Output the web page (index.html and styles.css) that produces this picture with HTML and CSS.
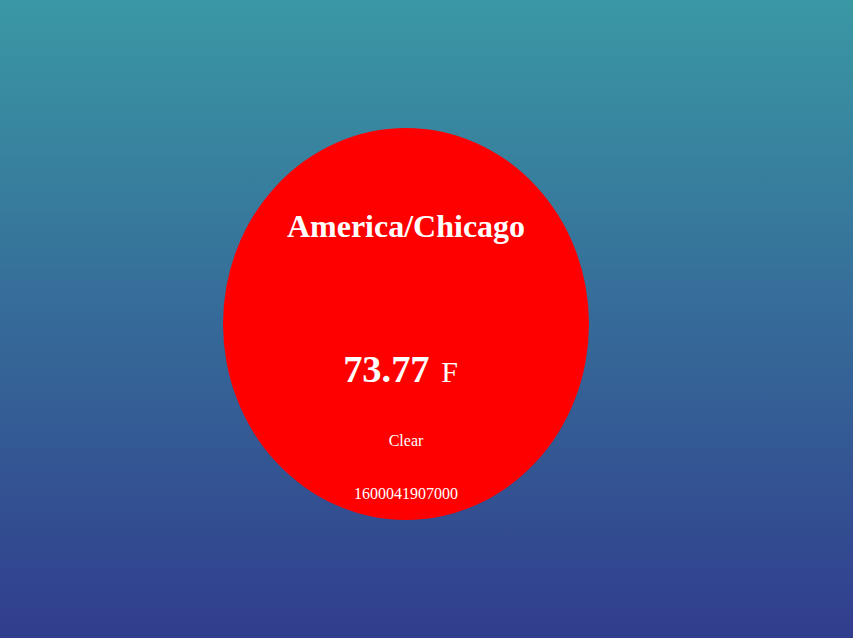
FILE: index.html
```html
<!DOCTYPE html>
<html>
<head>
<meta charset="utf-8">
<link rel="stylesheet" href="styles.css">
</head>
<body>
<div class="page">
  <div class="bubble">
    <h1 class="city">America/Chicago</h1>
    <div class="temp"><span class="value">73.77</span> <span class="unit">F</span></div>
    <div class="desc">Clear</div>
    <div class="time">1600041907000</div>
  </div>
</div>
</body>
</html>
```

FILE: styles.css
```css
html, body {
  margin: 0;
  padding: 0;
  height: 100%;
}
body {
  background: linear-gradient(to bottom, #3a98a4 0%, #313d8d 100%);
  font-family: "Liberation Serif", "Times New Roman", serif;
  color: #ffffff;
}
.page {
  height: 638px;
  padding: 128px 0 0 223px;
  box-sizing: border-box;
}
.bubble {
  width: 366px;
  height: 392px;
  border-radius: 50%;
  background: #ff0000;
  display: flex;
  flex-direction: column;
  align-items: center;
  text-align: center;
}
.city {
  margin: 80px 0 0 0;
  font-size: 32px;
  font-weight: bold;
  line-height: 37px;
}
.temp {
  margin-top: 102px;
  margin-right: 11px;
  font-size: 38.4px;
  line-height: 44px;
}
.value {
  font-weight: bold;
}
.unit {
  font-size: 30px;
  margin-left: 2px;
}
.desc {
  margin-top: 38px;
  font-size: 16px;
  line-height: 18px;
}
.time {
  margin-top: 35px;
  font-size: 16px;
  line-height: 18px;
}
```
